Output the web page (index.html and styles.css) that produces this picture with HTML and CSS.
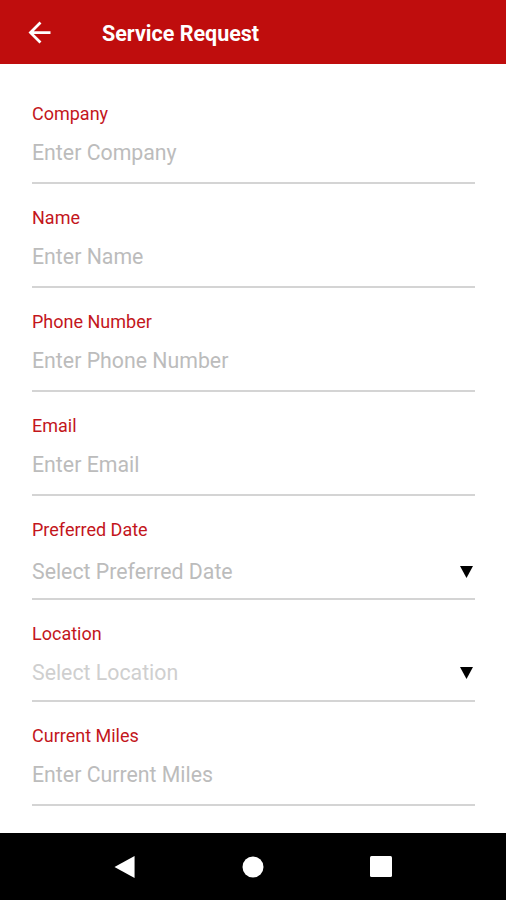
FILE: index.html
```html
<!DOCTYPE html>
<html>

<head>
    <meta charset="UTF-8">
    <title>Service Request</title>
    <link rel="stylesheet" href="styles.css">
</head>

<body>
    <!-- 顶部标题栏 -->
    <div class="toolbar">
        <svg class="back" viewBox="0 0 24 24">
            <path d="M20 11H7.83l5.59-5.59L12 4l-8 8 8 8 1.41-1.41L7.83 13H20v-2z" />
        </svg>
        <span class="title">Service Request</span>
    </div>

    <!-- 表单 -->
    <div class="form">
        <div class="field">
            <div class="label">Company</div>
            <div class="input"><span class="hint">Enter Company</span></div>
        </div>
        <div class="field">
            <div class="label">Name</div>
            <div class="input"><span class="hint">Enter Name</span></div>
        </div>
        <div class="field">
            <div class="label">Phone Number</div>
            <div class="input"><span class="hint">Enter Phone Number</span></div>
        </div>
        <div class="field">
            <div class="label">Email</div>
            <div class="input"><span class="hint">Enter Email</span></div>
        </div>
        <div class="field">
            <div class="label">Preferred Date</div>
            <div class="input select"><span class="hint">Select Preferred Date</span>
                <svg class="caret" viewBox="0 0 13 12"><polygon points="0,0 13,0 6.5,12" /></svg>
            </div>
        </div>
        <div class="field">
            <div class="label">Location</div>
            <div class="input select short"><span class="hint light">Select Location</span>
                <svg class="caret" viewBox="0 0 13 12"><polygon points="0,0 13,0 6.5,12" /></svg>
            </div>
        </div>
        <div class="field">
            <div class="label">Current Miles</div>
            <div class="input"><span class="hint">Enter Current Miles</span></div>
        </div>
        <div class="field">
            <div class="label">Notes</div>
            <div class="input"><span class="hint">Enter Notes</span></div>
        </div>
    </div>

    <!-- 系统导航栏 -->
    <div class="navbar">
        <svg class="nav-icon" viewBox="0 0 22 23"><polygon points="21,0 21,23 0,11.5" /></svg>
        <svg class="nav-icon" viewBox="0 0 22 22"><circle cx="11" cy="11" r="10.5" /></svg>
        <svg class="nav-icon" viewBox="0 0 22 22"><rect x="0" y="0" width="22" height="21" rx="1.5" /></svg>
    </div>
</body>

</html>
```

FILE: styles.css
```css
* {
    margin: 0;
    padding: 0;
}

body {
    font-family: Roboto, "Liberation Sans", sans-serif;
    background-color: #fff;
}

/*标题栏*/
.toolbar {
    height: 64px;
    background-color: #bf0d0d;
    display: flex;
    align-items: center;
    padding-left: 23px;
}

.back {
    width: 33px;
    height: 33px;
    fill: #fff;
}

.title {
    margin-left: 46px;
    padding-top: 2px;
    color: #fff;
    font-size: 21.5px;
    font-weight: bold;
}

/*表单*/
.form {
    padding: 38px 31px 0 32px;
}

.field {
    margin-bottom: 22px;
}

.label {
    font-size: 18px;
    line-height: 24px;
    color: #c3161c;
}

.input {
    height: 58px;
    box-sizing: border-box;
    padding-top: 14px;
    border-bottom: 2px solid #d4d4d4;
    display: flex;
    justify-content: space-between;
    align-items: flex-start;
}

.input.short {
    height: 56px;
    padding-top: 11px;
}

.hint {
    font-size: 21.3px;
    line-height: 26px;
    color: #bcbcbc;
}

.hint.light {
    color: #cfcfcf;
}

.select .hint {
    padding-top: 3px;
}

.caret {
    width: 13px;
    height: 12px;
    margin-top: 10px;
    margin-right: 2px;
    fill: #000;
}

/*底部导航*/
.navbar {
    position: fixed;
    left: 0;
    right: 0;
    bottom: 0;
    height: 67px;
    background-color: #000;
    display: flex;
    justify-content: center;
    align-items: center;
    gap: 106px;
}

.nav-icon {
    width: 22px;
    height: 22px;
    fill: #fff;
}
```
